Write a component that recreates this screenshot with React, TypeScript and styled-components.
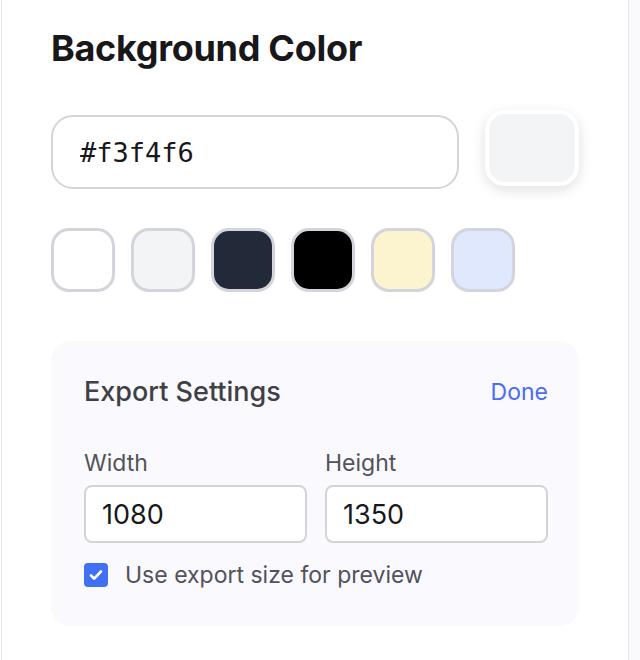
import React, { useState } from "react";
import styled, { createGlobalStyle } from "styled-components";

const GlobalStyle = createGlobalStyle`
  html, body {
    margin: 0;
    padding: 0;
    background: #ffffff;
    font-family: Inter, "Noto Sans", sans-serif;
  }
  * {
    box-sizing: border-box;
  }
`;

const SWATCHES = ["#ffffff", "#f3f4f6", "#222a3a", "#000000", "#fcf4cf", "#e0e8fd"];

const StyledPage = styled.div`
  display: flex;
  min-height: 100vh;
  padding-left: 1px;
`;

const StyledPanel = styled.aside`
  width: 628px;
  flex-shrink: 0;
  display: flex;
  flex-direction: column;
  padding: 26px 49px 36px;
  border-left: 1px solid #e4e4ef;
  border-right: 1px solid #e4e4ef;
  background: #ffffff;
`;

const StyledRest = styled.div`
  flex: 1;
  background: #f9f9fe;
`;

const StyledTitle = styled.h2`
  margin: 0;
  font-size: 36px;
  line-height: 44px;
  font-weight: 700;
  color: #18181b;
  letter-spacing: -0.3px;
`;

const StyledHexRow = styled.div`
  display: flex;
  align-items: flex-start;
  gap: 26px;
  margin-top: 45px;
`;

const StyledHexInput = styled.input`
  flex: 1;
  height: 74px;
  padding: 0 27px;
  border: 2px solid #d4d4dc;
  border-radius: 22px;
  background: #fff;
  font-family: "DejaVu Sans Mono", "Liberation Mono", monospace;
  font-size: 27px;
  color: #18181b;
  outline: none;
`;

const StyledPreview = styled.div<{ $color: string }>`
  width: 94px;
  height: 76px;
  margin-top: -5px;
  border: 4px solid #ffffff;
  border-radius: 20px;
  background: ${({ $color }) => $color};
  box-shadow: 0 4px 14px rgba(0, 0, 0, 0.12);
`;

const StyledSwatchRow = styled.div`
  display: flex;
  gap: 16px;
  margin-top: 39px;
`;

const StyledSwatch = styled.button<{ $color: string }>`
  width: 64px;
  height: 64px;
  padding: 0;
  border: 3px solid #d4d4dc;
  border-radius: 18px;
  background: ${({ $color }) => $color};
  cursor: pointer;
`;

const StyledCard = styled.section`
  display: flex;
  flex-direction: column;
  margin-top: 49px;
  padding: 35px 31px 37px 33px;
  border-radius: 20px;
  background: #f9f9fe;
`;

const StyledCardHeader = styled.div`
  display: flex;
  align-items: center;
  justify-content: space-between;
`;

const StyledCardTitle = styled.h3`
  margin: 0;
  font-size: 27px;
  line-height: 32px;
  font-weight: 500;
  color: #3f3f46;
`;

const StyledDone = styled.button`
  padding: 0;
  border: none;
  background: none;
  font-family: inherit;
  font-size: 23px;
  color: #4a6cf7;
  cursor: pointer;
`;

const StyledSizeGrid = styled.div`
  display: grid;
  grid-template-columns: 1fr 1fr;
  gap: 18px;
  margin-top: 40px;
`;

const StyledField = styled.label`
  display: flex;
  flex-direction: column;
  gap: 7px;
`;

const StyledLabel = styled.span`
  font-size: 23px;
  line-height: 30px;
  color: #52525b;
`;

const StyledSizeInput = styled.input`
  width: 100%;
  height: 58px;
  padding: 0 16px;
  border: 2px solid #d4d4d8;
  border-radius: 8px;
  background: #fff;
  font-family: inherit;
  font-size: 27px;
  color: #18181b;
  outline: none;
`;

const StyledCheckRow = styled.label`
  display: flex;
  align-items: center;
  gap: 17px;
  margin-top: 18px;
  font-size: 23px;
  color: #52525b;
  cursor: pointer;
`;

const StyledCheckBox = styled.span`
  display: flex;
  align-items: center;
  justify-content: center;
  width: 24px;
  height: 24px;
  border-radius: 4px;
  background: #4070f4;
`;

function App() {
  const [hex, setHex] = useState("#f3f4f6");
  const [width, setWidth] = useState("1080");
  const [height, setHeight] = useState("1350");

  return (
    <>
      <GlobalStyle />
      <StyledPage>
        <StyledPanel>
          <StyledTitle>Background Color</StyledTitle>
          <StyledHexRow>
            <StyledHexInput value={hex} onChange={(e) => setHex(e.target.value)} />
            <StyledPreview $color={hex} />
          </StyledHexRow>
          <StyledSwatchRow>
            {SWATCHES.map((c) => (
              <StyledSwatch key={c} $color={c} onClick={() => setHex(c)} />
            ))}
          </StyledSwatchRow>

          <StyledCard>
            <StyledCardHeader>
              <StyledCardTitle>Export Settings</StyledCardTitle>
              <StyledDone>Done</StyledDone>
            </StyledCardHeader>
            <StyledSizeGrid>
              <StyledField>
                <StyledLabel>Width</StyledLabel>
                <StyledSizeInput value={width} onChange={(e) => setWidth(e.target.value)} />
              </StyledField>
              <StyledField>
                <StyledLabel>Height</StyledLabel>
                <StyledSizeInput value={height} onChange={(e) => setHeight(e.target.value)} />
              </StyledField>
            </StyledSizeGrid>
            <StyledCheckRow>
              <StyledCheckBox>
                <svg width="16" height="16" viewBox="0 0 16 16" fill="none">
                  <path d="M3 8.5l3.2 3.2L13 4.5" stroke="#fff" strokeWidth="2.6" strokeLinecap="round" strokeLinejoin="round" />
                </svg>
              </StyledCheckBox>
              Use export size for preview
            </StyledCheckRow>
          </StyledCard>
        </StyledPanel>
        <StyledRest />
      </StyledPage>
    </>
  );
}

export default App;
